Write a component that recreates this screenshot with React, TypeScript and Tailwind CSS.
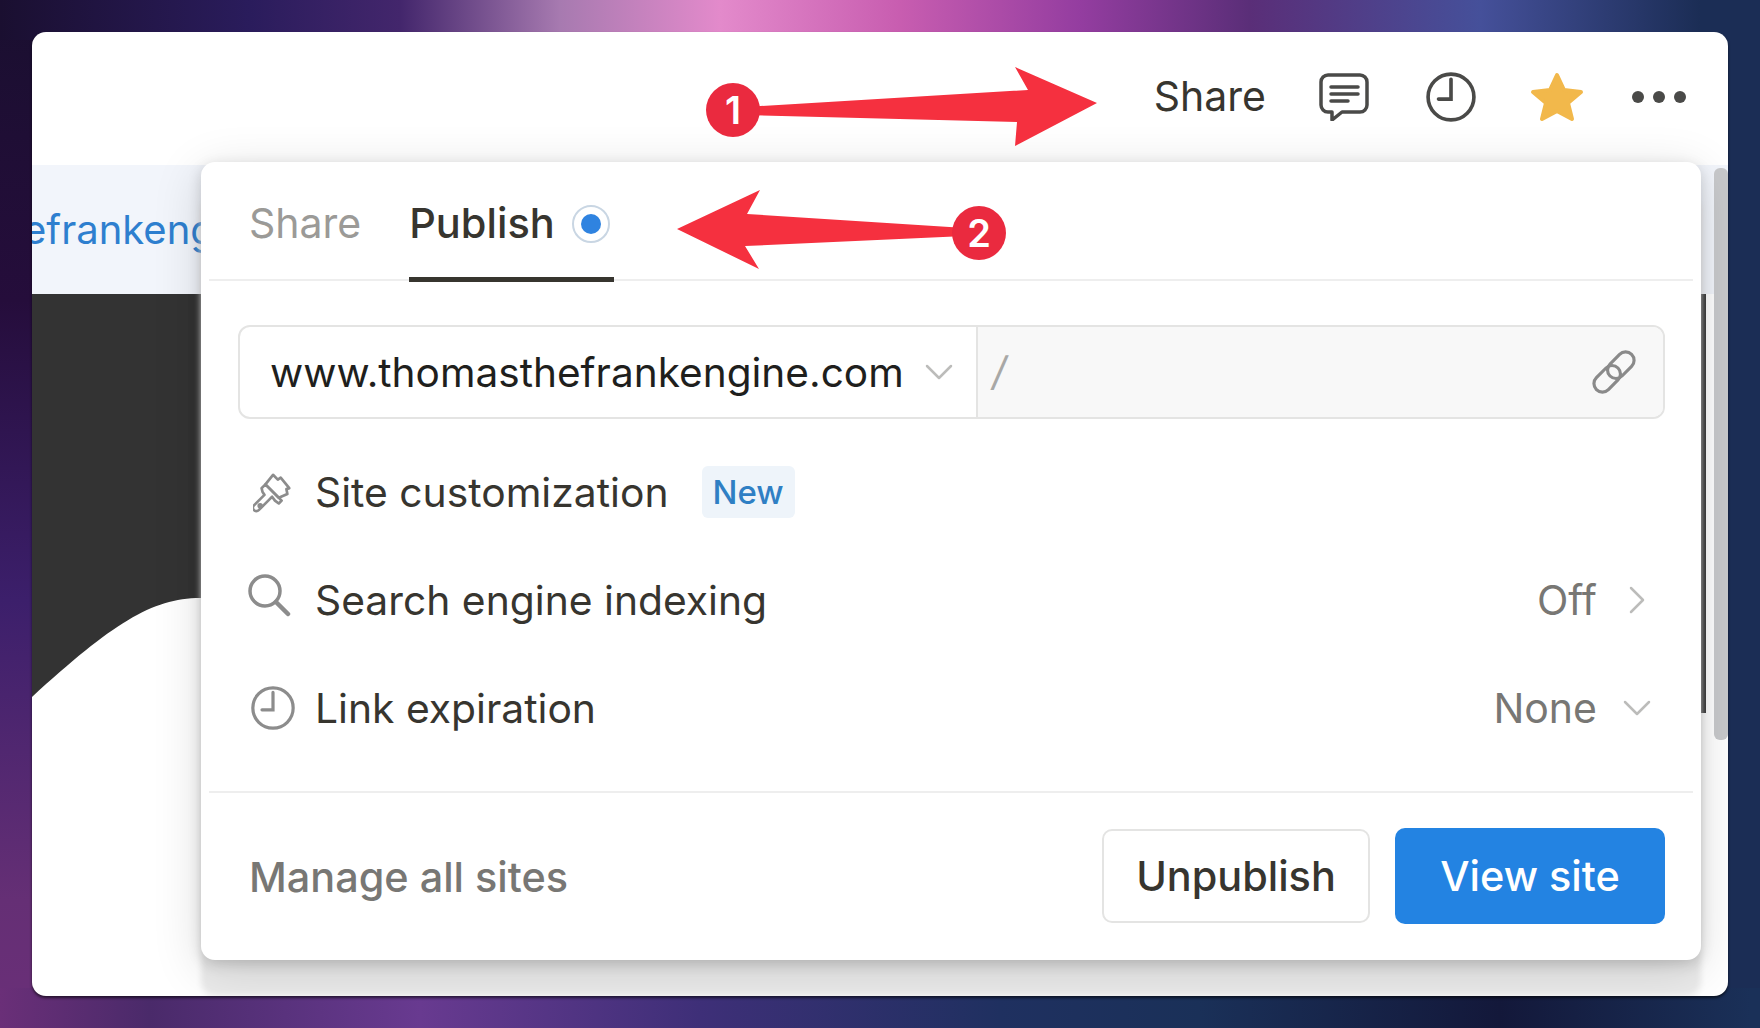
const font = "font-['Inter','Liberation_Sans',sans-serif]";

function ClockIcon({ className, stroke = '#8c8c8c' }: { className?: string; stroke?: string }) {
  return (
    <svg viewBox="0 0 48 48" className={className} fill="none" stroke={stroke} strokeWidth="3.500" strokeLinecap="round">
      <circle cx="24" cy="24" r="22" />
      <path d="M24 7v19H12" />
    </svg>
  );
}

function CommentIcon() {
  return (
    <svg viewBox="0 0 50 48" className="h-[48px] w-[50px]" fill="none" stroke="#4a4a48" strokeWidth="3.500" strokeLinecap="round" strokeLinejoin="round">
      <path d="M9 2h32a7 7 0 0 1 7 7v23a7 7 0 0 1-7 7H23l-10 8v-8H9a7 7 0 0 1-7-7V9a7 7 0 0 1 7-7z" />
      <path d="M12 14h27M12 21h27M12 28h17" />
    </svg>
  );
}

function BrushIcon() {
  return (
    <svg viewBox="0 0 44 44" className="h-[44px] w-[42px] translate-x-[3px]" fill="none" stroke="#8c8c8c" strokeWidth="2.800" strokeLinejoin="round" strokeLinecap="round">
      <path d="M21 4l5 5 3-2 9 11-3 1 1 5-9 4-14-14z" />
      <path d="M13 14l17 17-3 3-4-3-3-4-3 3-11 11a3 3 0 0 1-5-5l11-11-2-3-1-4z" />
      <circle cx="7.500" cy="36.500" r="1.500" />
    </svg>
  );
}

function SearchIcon() {
  return (
    <svg viewBox="0 0 44 44" className="h-[44px] w-[44px] -translate-x-[2px] -translate-y-[5px]" fill="none" stroke="#8c8c8c" strokeWidth="3.500" strokeLinecap="round">
      <circle cx="18" cy="18" r="15" />
      <path d="M29 29l12 12" strokeWidth="4.500" />
    </svg>
  );
}

function LinkIcon() {
  return (
    <svg viewBox="0 0 46 46" className="h-[52px] w-[52px]" fill="none" stroke="#8a8a8a" strokeWidth="2.800">
      <g transform="rotate(-45 23 23)">
        <rect x="1" y="15.500" width="27" height="15" rx="7.500" />
        <rect x="18" y="15.500" width="27" height="15" rx="7.500" />
      </g>
    </svg>
  );
}

function ChevronDownIcon({ className }: { className?: string }) {
  return (
    <svg viewBox="0 0 28 16" className={`h-[16px] w-[28px] ${className ?? ''}`} fill="none" stroke="#bcbcba" strokeWidth="2.500" strokeLinecap="round" strokeLinejoin="round">
      <path d="M2 2l12 12L26 2" />
    </svg>
  );
}

function ChevronRightIcon({ className }: { className?: string }) {
  return (
    <svg viewBox="0 0 28 28" className={`h-[28px] w-[28px] ${className ?? ''}`} fill="none" stroke="#bcbcba" strokeWidth="2.500" strokeLinecap="round" strokeLinejoin="round">
      <path d="M8 2l12 12L8 26" />
    </svg>
  );
}

function Row({ icon, label, children }: { icon: React.ReactNode; label: string; children?: React.ReactNode }) {
  return (
    <div className="flex h-[108px] items-center pl-[48px] pr-[50px]">
      <div className="flex w-[44px] items-center justify-center">{icon}</div>
      <span className="ml-[22px] text-[40.800px] leading-none text-[#37352f]">{label}</span>
      {children}
    </div>
  );
}

// Red annotation arrows and their numbered circles, in page coordinates
function Annotations() {
  return (
    <svg viewBox="32 32 1696 964" className="pointer-events-none absolute inset-0 h-full w-full">
      <polygon points="745,107 1028,90 1015,67 1097,103 1015,146 1017,122 745,115" fill="#f5303f" />
      <circle cx="733" cy="110" r="27" fill="#ea2a3f" />
      <text x="733" y="124" textAnchor="middle" fill="#fff" fontSize="38" fontWeight="600" fontFamily="Inter, sans-serif">1</text>
      <polygon points="677,229 760,190 747,214 965,228 965,236 745,246 759,269" fill="#f5303f" />
      <circle cx="979" cy="233" r="27" fill="#ea2a3f" />
      <text x="979" y="247" textAnchor="middle" fill="#fff" fontSize="38" fontWeight="600" fontFamily="Inter, sans-serif">2</text>
    </svg>
  );
}

function PublishPopover() {
  return (
    <div className="absolute left-[169px] top-[130px] flex h-[798px] w-[1500px] flex-col rounded-[14px] bg-white shadow-[0_4px_14px_rgba(0,0,0,0.16),0_10px_50px_rgba(0,0,0,0.14),0_36px_6px_#ebebeb]">
      <div className="mx-[8px] flex h-[119px] items-stretch border-b-2 border-[#eeeeee] pl-[40px]">
        <div className="flex items-center pt-[6px] text-[41px] leading-none text-[#9b9a97]">Share</div>
        <div className="relative ml-[48px] flex w-[205px] items-center pt-[6px]">
          <span className="text-[41.500px] font-medium leading-none text-[#37352f]">Publish</span>
          <span className="ml-[17px] flex h-[38px] w-[38px] items-center justify-center rounded-full border-2 border-[#c9d6e3] bg-white">
            <span className="h-[20px] w-[20px] rounded-full bg-[#2f83e0]" />
          </span>
          <span className="absolute bottom-[-3px] left-0 h-[5px] w-full bg-[#37352f]" />
        </div>
      </div>

      <div className="ml-[37px] mt-[44px] flex h-[94px] w-[1427px] rounded-[12px] border-2 border-[#e4e4e3]">
        <div className="flex w-[738px] items-center border-r-2 border-[#e4e4e3] pl-[30px]">
          <span className="pt-[2px] text-[40.600px] leading-none text-[#1f1f1d]">www.thomasthefrankengine.com</span>
          <ChevronDownIcon className="ml-[21px]" />
        </div>
        <div className="flex flex-1 items-center justify-between rounded-r-[10px] bg-[#f8f8f8] pl-[14px] pr-[23px]">
          <span className="text-[40px] italic leading-none text-[#a8a8a6]">/</span>
          <LinkIcon />
        </div>
      </div>

      <div className="mt-[19px] flex flex-col">
        <Row icon={<BrushIcon />} label="Site customization">
          <span className="ml-[33px] flex h-[52px] w-[93px] items-center justify-center rounded-[6px] bg-[#eef4fa] text-[33px] font-medium leading-none text-[#2f7fc4]">New</span>
        </Row>
        <Row icon={<SearchIcon />} label="Search engine indexing">
          <span className="ml-auto text-[41px] leading-none text-[#787774]">Off</span>
          <ChevronRightIcon className="ml-[26px]" />
        </Row>
        <Row icon={<ClockIcon className="h-[44px] w-[44px] translate-x-[2px]" />} label="Link expiration">
          <span className="ml-auto text-[41px] leading-none text-[#787774]">None</span>
          <ChevronDownIcon className="ml-[26px]" />
        </Row>
      </div>

      <div className="mx-[8px] mt-[29px] border-t-2 border-[#eeeeee]" />

      <div className="flex flex-1 items-center pl-[48px] pr-[36px]">
        <span className="pt-[2px] text-[41.400px] font-medium leading-none text-[#787774]">Manage all sites</span>
        <button className="ml-auto flex h-[94px] w-[268px] -translate-y-[1px] items-center justify-center rounded-[10px] border-2 border-[#e4e4e3] bg-white pt-[2px] text-[41.400px] font-medium leading-none text-[#37352f]">Unpublish</button>
        <button className="ml-[25px] flex h-[96px] w-[270px] -translate-y-[1px] items-center justify-center rounded-[10px] bg-[#2383e2] pt-[2px] text-[41.400px] font-medium leading-none text-white">View site</button>
      </div>
    </div>
  );
}

export default function App() {
  return (
    <div className={`${font} flex h-[1028px] w-[1760px] items-center justify-center overflow-hidden bg-[#1b2d55] [background:linear-gradient(to_right,#6a2f78_0px,#4a2a6a_150px,#683a90_420px,#3e2f78_700px,#1f3060_1000px,#1a3058_1200px,#13183a_1500px,#1a3058_1750px)_left_bottom/100%_40px_no-repeat,linear-gradient(to_right,#1a0f30_0px,#2a1c5c_250px,#43266c_400px,#a77ab0_560px,#e38acb_720px,#c85db0_900px,#943da0_1080px,#5a2e78_1250px,#45509a_1480px,#1b2d55_1700px)_left_top/100%_40px_no-repeat,linear-gradient(to_bottom,#1a0f30_0px,#250d3b_300px,#3c1f6b_600px,#652f75_900px,#6a2f78_1028px)_left_top/40px_100%_no-repeat,#1b2d55]`}>
      <div className="relative flex h-[964px] w-[1696px] flex-col overflow-hidden rounded-[14px] bg-white shadow-[0_2px_3px_rgba(0,0,0,0.6)]">
        <header className="flex h-[133px] shrink-0 items-center justify-end pb-[4px] pr-[42px] text-[41px] leading-none text-[#37352f]">
          <span>Share</span>
          <span className="ml-[53px]"><CommentIcon /></span>
          <span className="ml-[57px]"><ClockIcon className="h-[50px] w-[50px]" stroke="#4a4a48" /></span>
          <svg viewBox="0 0 54 50" className="ml-[54px] h-[50px] w-[54px]">
            <polygon points="27,3 34,18 51,20 38,31 42,47 27,39 12,47 16,31 3,20 20,18" fill="#f2b84b" stroke="#f2b84b" strokeWidth="4" strokeLinejoin="round" />
          </svg>
          <span className="ml-[48px] flex gap-[9px]">
            <span className="h-[12px] w-[12px] rounded-full bg-[#4a4a48]" />
            <span className="h-[12px] w-[12px] rounded-full bg-[#4a4a48]" />
            <span className="h-[12px] w-[12px] rounded-full bg-[#4a4a48]" />
          </span>
        </header>

        <div className="flex h-[129px] shrink-0 items-center overflow-hidden bg-[#f2f5fb]">
          <span className="-ml-[9px] whitespace-nowrap text-[40px] leading-none text-[#2e7fcf]">efrankengine.com</span>
        </div>

        {/* dark hero with its wave edge */}
        <svg viewBox="0 0 1674 702" className="h-[702px] w-[1674px] shrink-0">
          <path d="M0 0H1674V419H1600V304H168C120 304 80 330 0 403Z" fill="#333333" />
        </svg>

        <div className="absolute right-0 top-[136px] h-[572px] w-[14px] rounded-t-[6px] rounded-b-[6px] bg-[#c8c9cb]" />
        <PublishPopover />
        <Annotations />
      </div>
    </div>
  );
}
